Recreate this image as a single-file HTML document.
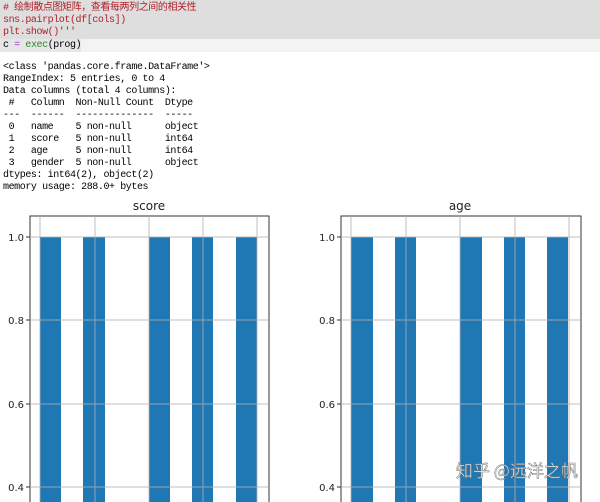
<!DOCTYPE html>
<html><head><meta charset="utf-8"><style>
html,body{margin:0;padding:0;width:600px;height:502px;overflow:hidden;background:#fff}
.code{position:absolute;left:0;top:0;width:600px;height:39px;background:#dedede}
.l4{position:absolute;left:0;top:39px;width:600px;height:13px;background:#f3f3f3}
.l4b{position:absolute;left:0;top:39px;width:81px;height:13px;background:#e6e6e6}
pre{position:absolute;left:3px;margin:0;font-family:"Liberation Mono","Noto Sans CJK SC",monospace;font-size:10px;letter-spacing:-0.42px;line-height:12px;color:#000}
.r{color:#b0202a}
</style></head><body>
<div class="code"></div><div class="l4"></div><div class="l4b"></div>
<pre style="top:3px;line-height:12.2px"><span class="r"># 绘制散点图矩阵，查看每两列之间的相关性
sns.pairplot(df[cols])
plt.show()'''</span>
c <span style="color:#a03ad0">=</span> <span style="color:#2a8a2a">exec</span>(prog)</pre>
<pre style="top:62px">&lt;class 'pandas.core.frame.DataFrame'&gt;
RangeIndex: 5 entries, 0 to 4
Data columns (total 4 columns):
 #   Column  Non-Null Count  Dtype 
---  ------  --------------  ----- 
 0   name    5 non-null      object
 1   score   5 non-null      int64 
 2   age     5 non-null      int64 
 3   gender  5 non-null      object
dtypes: int64(2), object(2)
memory usage: 288.0+ bytes</pre>
<svg width="600" height="502" style="position:absolute;left:0;top:0" font-family="'DejaVu Sans',sans-serif">
<g id="p1">
<rect x="30" y="216" width="239" height="300" fill="#fff" stroke="#333" stroke-width="1"/>
<g fill="#1f77b4">
<rect x="40" y="237" width="21" height="280"/><rect x="83" y="237" width="22" height="280"/><rect x="149" y="237" width="21" height="280"/><rect x="192" y="237" width="21" height="280"/><rect x="236" y="237" width="21" height="280"/></g>
<g stroke="#b0b0b0" stroke-width="1" opacity="0.8">
<line x1="40" y1="216" x2="40" y2="502"/><line x1="95" y1="216" x2="95" y2="502"/><line x1="149" y1="216" x2="149" y2="502"/><line x1="203" y1="216" x2="203" y2="502"/><line x1="257" y1="216" x2="257" y2="502"/>
<line x1="30" y1="237" x2="269" y2="237"/><line x1="30" y1="320" x2="269" y2="320"/><line x1="30" y1="404" x2="269" y2="404"/><line x1="30" y1="487" x2="269" y2="487"/></g>
<g stroke="#333"><line x1="26" y1="237" x2="30" y2="237"/><line x1="26" y1="320" x2="30" y2="320"/><line x1="26" y1="404" x2="30" y2="404"/><line x1="26" y1="487" x2="30" y2="487"/></g>
<g font-size="10" fill="#222" text-anchor="end"><text x="24" y="241">1.0</text><text x="24" y="324">0.8</text><text x="24" y="408">0.6</text><text x="24" y="491">0.4</text></g>
<text x="149" y="210" font-size="12" text-anchor="middle" fill="#222">score</text>
</g>
<g>
<rect x="341" y="216" width="240" height="300" fill="#fff" stroke="#333" stroke-width="1"/>
<g fill="#1f77b4">
<rect x="351" y="237" width="22" height="280"/><rect x="395" y="237" width="21" height="280"/><rect x="460" y="237" width="22" height="280"/><rect x="504" y="237" width="21" height="280"/><rect x="547" y="237" width="21" height="280"/></g>
<g stroke="#b0b0b0" stroke-width="1" opacity="0.8">
<line x1="351" y1="216" x2="351" y2="502"/><line x1="406" y1="216" x2="406" y2="502"/><line x1="460" y1="216" x2="460" y2="502"/><line x1="515" y1="216" x2="515" y2="502"/><line x1="569" y1="216" x2="569" y2="502"/>
<line x1="341" y1="237" x2="581" y2="237"/><line x1="341" y1="320" x2="581" y2="320"/><line x1="341" y1="404" x2="581" y2="404"/><line x1="341" y1="487" x2="581" y2="487"/></g>
<g stroke="#333"><line x1="337" y1="237" x2="341" y2="237"/><line x1="337" y1="320" x2="341" y2="320"/><line x1="337" y1="404" x2="341" y2="404"/><line x1="337" y1="487" x2="341" y2="487"/></g>
<g font-size="10" fill="#222" text-anchor="end"><text x="335" y="241">1.0</text><text x="335" y="324">0.8</text><text x="335" y="408">0.6</text><text x="335" y="491">0.4</text></g>
<text x="460" y="210" font-size="12" text-anchor="middle" fill="#222">age</text>
</g>
<text x="456" y="477" font-size="17" fill="#fff" stroke="#777" stroke-width="0.6" font-family="'Noto Sans CJK SC',sans-serif" opacity="0.9">知乎 @远洋之帆</text>
</svg>
</body></html>
